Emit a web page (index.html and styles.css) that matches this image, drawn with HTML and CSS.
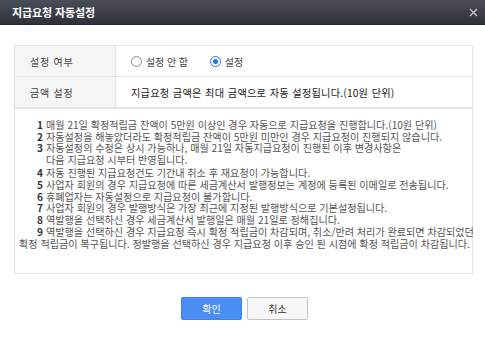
FILE: index.html
```html
<!DOCTYPE html>
<html lang="ko">
<head>
<meta charset="utf-8">
<link rel="stylesheet" href="styles.css">
</head>
<body>
<div class="dialog">
  <div class="titlebar">
    <span class="title">지급요청 자동설정</span>
    <svg class="close" width="9" height="9" viewBox="0 0 9 9"><path d="M1 1L8 8M8 1L1 8" stroke="#c9cad0" stroke-width="1.3" fill="none"/></svg>
  </div>
  <div class="body">
    <div class="form">
      <div class="row">
        <div class="label">설정 여부</div>
        <div class="value">
          <label class="radio"><span class="dot"></span>설정 안 함</label>
          <label class="radio on"><span class="dot"></span>설정</label>
        </div>
      </div>
      <div class="row">
        <div class="label">금액 설정</div>
        <div class="value strong">지급요청 금액은 최대 금액으로 자동 설정됩니다.(10원 단위)</div>
      </div>
    </div>
    <div class="notes">
      <p><b>1</b>매월 21일 확정적립금 잔액이 5만원 이상인 경우 자동으로 지급요청을 진행합니다.(10원 단위)</p>
      <p><b>2</b>자동설정을 해놓았더라도 확정적립금 잔액이 5만원 미만인 경우 지급요청이 진행되지 않습니다.</p>
      <p><b>3</b>자동설정의 수정은 상시 가능하나, 매월 21일 자동지급요청이 진행된 이후 변경사항은</p>
      <p class="cont">다음 지급요청 시부터 반영됩니다.</p>
      <p class="gap"><b>4</b>자동 진행된 지급요청건도 기간내 취소 후 재요청이 가능합니다.</p>
      <p><b>5</b>사업자 회원의 경우 지급요청에 따른 세금계산서 발행정보는 계정에 등록된 이메일로 전송됩니다.</p>
      <p><b>6</b>휴폐업자는 자동설정으로 지급요청이 불가합니다.</p>
      <p><b>7</b>사업자 회원의 경우 발행방식은 가장 최근에 지정된 발행방식으로 기본설정됩니다.</p>
      <p><b>8</b>역발행을 선택하신 경우 세금계산서 발행일은 매월 21일로 정해집니다.</p>
      <p><b>9</b>역발행을 선택하신 경우 지급요청 즉시 확정 적립금이 차감되며, 취소/반려 처리가 완료되면 차감되었던</p>
      <p class="wrap">확정 적립금이 복구됩니다. 정발행을 선택하신 경우 지급요청 이후 승인 된 시점에 확정 적립금이 차감됩니다.</p>
    </div>
    <div class="buttons">
      <button class="btn primary">확인</button>
      <button class="btn">취소</button>
    </div>
  </div>
</div>
</body>
</html>
```
FILE: styles.css
```css
* { box-sizing: border-box; }
html, body { margin: 0; padding: 0; background: #fff; }
body {
  font-family: "Noto Sans CJK KR", "Noto Sans", sans-serif;
  color: #444;
  width: 485px;
  height: 349px;
  overflow: hidden;
}
.titlebar {
  height: 25px;
  background: linear-gradient(#4a4c57, #30323b);
  border-bottom: 1px solid #23252c;
  display: flex;
  align-items: center;
  justify-content: space-between;
  padding: 0 7px 0 12px;
}
.title {
  color: #fff;
  font-weight: bold;
  font-size: 11px;
  letter-spacing: -0.1px;
}
.close { display: block; }
.body { padding: 20px 12px 0 14px; }
.form {
  border: 1px solid #e2e2e2;
  border-bottom: none;
}
.row {
  display: grid;
  grid-template-columns: 101px 1fr;
  height: 31px;
  border-bottom: 1px solid #e6e6e6;
}
.label {
  background: #f5f5f5;
  border-right: 1px solid #e6e6e6;
  display: flex;
  align-items: center;
  padding-left: 15px;
  font-size: 10px;
  color: #444;
  letter-spacing: 0.8px;
}
.value {
  display: flex;
  align-items: center;
  padding-left: 15px;
  font-size: 10px;
  color: #444;
}
.value.strong {
  color: #222;
  font-size: 10.2px;
  letter-spacing: 0.2px;
  word-spacing: 0.5px;
}
.radio {
  display: flex;
  align-items: center;
  gap: 4px;
  margin-right: 22px;
  letter-spacing: -0.1px;
}
.dot {
  width: 11px;
  height: 11px;
  border-radius: 50%;
  border: 1px solid #8a8a8a;
  background: #fff;
  position: relative;
}
.radio.on .dot { border-color: #2b78e4; }
.radio.on .dot::after {
  content: "";
  position: absolute;
  left: 2px; top: 2px;
  width: 5px; height: 5px;
  border-radius: 50%;
  background: #1a73e8;
}
.notes {
  border: 1px solid #e2e2e2;
  height: 166px;
  padding: 10px 0 0 4px;
  font-size: 10.1px;
  color: #555;
}
.notes p {
  margin: 0;
  line-height: 11.7px;
  white-space: nowrap;
  padding-left: 18px;
}
.notes p b {
  display: inline-block;
  width: 9px;
  color: #333;
  font-weight: bold;
}
.notes p.cont { padding-left: 27px; }
.notes p.gap { margin-top: 1.5px; }
.notes p.wrap { padding-left: 0; }
.buttons {
  display: flex;
  justify-content: center;
  gap: 5px;
  margin-top: 23px;
  padding-left: 2px;
}
.btn {
  width: 61px;
  height: 23px;
  font-family: inherit;
  font-size: 10px;
  border-radius: 2px;
  border: 1px solid #c4c4c4;
  background: #f7f7f7;
  color: #333;
  padding: 0;
}
.btn.primary {
  background: #4a8ef5;
  border-color: #3f82ea;
  color: #fff;
}
```
